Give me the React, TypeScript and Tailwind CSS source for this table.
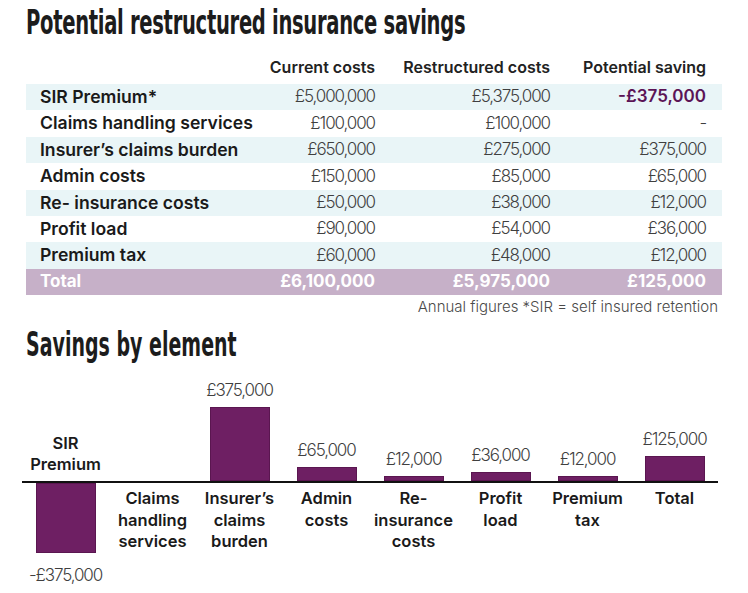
import React from 'react';

type Row = { label: string; current: string; restructured: string; saving: string; neg?: boolean };

const rows: Row[] = [
  { label: 'SIR Premium*', current: '£5,000,000', restructured: '£5,375,000', saving: '-£375,000', neg: true },
  { label: 'Claims handling services', current: '£100,000', restructured: '£100,000', saving: '-' },
  { label: 'Insurer’s claims burden', current: '£650,000', restructured: '£275,000', saving: '£375,000' },
  { label: 'Admin costs', current: '£150,000', restructured: '£85,000', saving: '£65,000' },
  { label: 'Re- insurance costs', current: '£50,000', restructured: '£38,000', saving: '£12,000' },
  { label: 'Profit load', current: '£90,000', restructured: '£54,000', saving: '£36,000' },
  { label: 'Premium tax', current: '£60,000', restructured: '£48,000', saving: '£12,000' },
];

type Bar = { label: string[]; value: string; height: number; neg?: boolean };

const bars: Bar[] = [
  { label: ['SIR', 'Premium'], value: '-£375,000', height: 70, neg: true },
  { label: ['Claims', 'handling', 'services'], value: '', height: 0 },
  { label: ['Insurer’s', 'claims', 'burden'], value: '£375,000', height: 74 },
  { label: ['Admin', 'costs'], value: '£65,000', height: 14 },
  { label: ['Re-', 'insurance', 'costs'], value: '£12,000', height: 5 },
  { label: ['Profit', 'load'], value: '£36,000', height: 9 },
  { label: ['Premium', 'tax'], value: '£12,000', height: 5 },
  { label: ['Total'], value: '£125,000', height: 25 },
];

const sans = "font-['Inter','Liberation_Sans',sans-serif]";
const heading =
  "inline-block font-['DejaVu_Sans_Condensed','DejaVu_Sans',sans-serif] font-black text-[#1c1c1c] origin-left scale-x-[0.64] whitespace-nowrap";
const num = 'font-light text-[#3f3f3f] tracking-[-1.1px]';

export default function App() {
  return (
    <div className={`w-[748px] h-[593px] bg-white overflow-hidden ${sans}`}>
      <h1 className="pl-[26px] h-[44px] leading-[44px]">
        <span className={`${heading} text-[34px] tracking-[-0.5px]`}>Potential restructured insurance savings</span>
      </h1>

      {/* Table */}
      <div className="mx-[26px]">
        <div className="grid grid-cols-[215px_120px_175px_156px] pl-[14px] pr-[12px] h-[40px] pt-[13px] text-[16px] leading-[20px] font-semibold text-[#222]">
          <div />
          <div className="text-right">Current costs</div>
          <div className="text-right">Restructured costs</div>
          <div className="text-right">Potential saving</div>
        </div>
        {rows.map((r, i) => (
          <div
            key={r.label}
            className={`grid grid-cols-[215px_120px_175px_156px] items-center pl-[14px] pr-[12px] h-[26.4px] text-[17px] ${i % 2 === 0 ? 'bg-[#e9f5f7]' : 'bg-white'}`}
          >
            <div className="text-[17.6px] font-semibold text-[#1a1a1a] whitespace-nowrap">{r.label}</div>
            <div className={`text-right ${num}`}>{r.current}</div>
            <div className={`text-right ${num}`}>{r.restructured}</div>
            <div className={`text-right ${r.neg ? 'font-semibold text-[#5b1456]' : num}`}>{r.saving}</div>
          </div>
        ))}
        <div className="grid grid-cols-[215px_120px_175px_156px] items-center pl-[14px] pr-[12px] h-[26.4px] text-[17px] font-bold text-white bg-[#c6b0c8]">
          <div>Total</div>
          <div className="text-right">£6,100,000</div>
          <div className="text-right">£5,975,000</div>
          <div className="text-right">£125,000</div>
        </div>
        <div className="h-[24px] pr-[4px] flex items-center justify-end text-[15px] font-light text-[#4a4a4a]">
          Annual figures *SIR = self insured retention
        </div>
      </div>

      <h2 className="pl-[26px] mt-[8px] h-[36px] leading-[36px]">
        <span className={`${heading} text-[33px]`}>Savings by element</span>
      </h2>

      {/* Chart */}
      <div className="flex ml-[22px] mt-[10px]">
        {bars.map((b) => (
          <div key={b.label.join(' ')} className="w-[87px] flex flex-col">
            <div className="h-[110px] flex flex-col justify-end items-center border-b-2 border-[#111]">
              {b.neg ? (
                <div className="mb-[6px] text-center text-[16.5px] leading-[21px] font-semibold text-[#1a1a1a]">
                  {b.label.map((l) => (
                    <div key={l}>{l}</div>
                  ))}
                </div>
              ) : b.value ? (
                <>
                  <div className={`mb-[7px] text-[17px] leading-[20px] ${num}`}>{b.value}</div>
                  <div className="w-[60px] bg-[#6e1f63] border border-[#5a1650]" style={{ height: b.height }} />
                </>
              ) : null}
            </div>
            <div className="flex flex-col items-center">
              {b.neg ? (
                <>
                  <div className="w-[60px] bg-[#6e1f63] border border-[#5a1650]" style={{ height: b.height }} />
                  <div className={`mt-[12px] text-[17px] leading-[20px] ${num}`}>{b.value}</div>
                </>
              ) : (
                <div className="pt-[5px] text-center text-[16.5px] leading-[21.5px] font-semibold text-[#1a1a1a]">
                  {b.label.map((l) => (
                    <div key={l}>{l}</div>
                  ))}
                </div>
              )}
            </div>
          </div>
        ))}
      </div>
    </div>
  );
}
